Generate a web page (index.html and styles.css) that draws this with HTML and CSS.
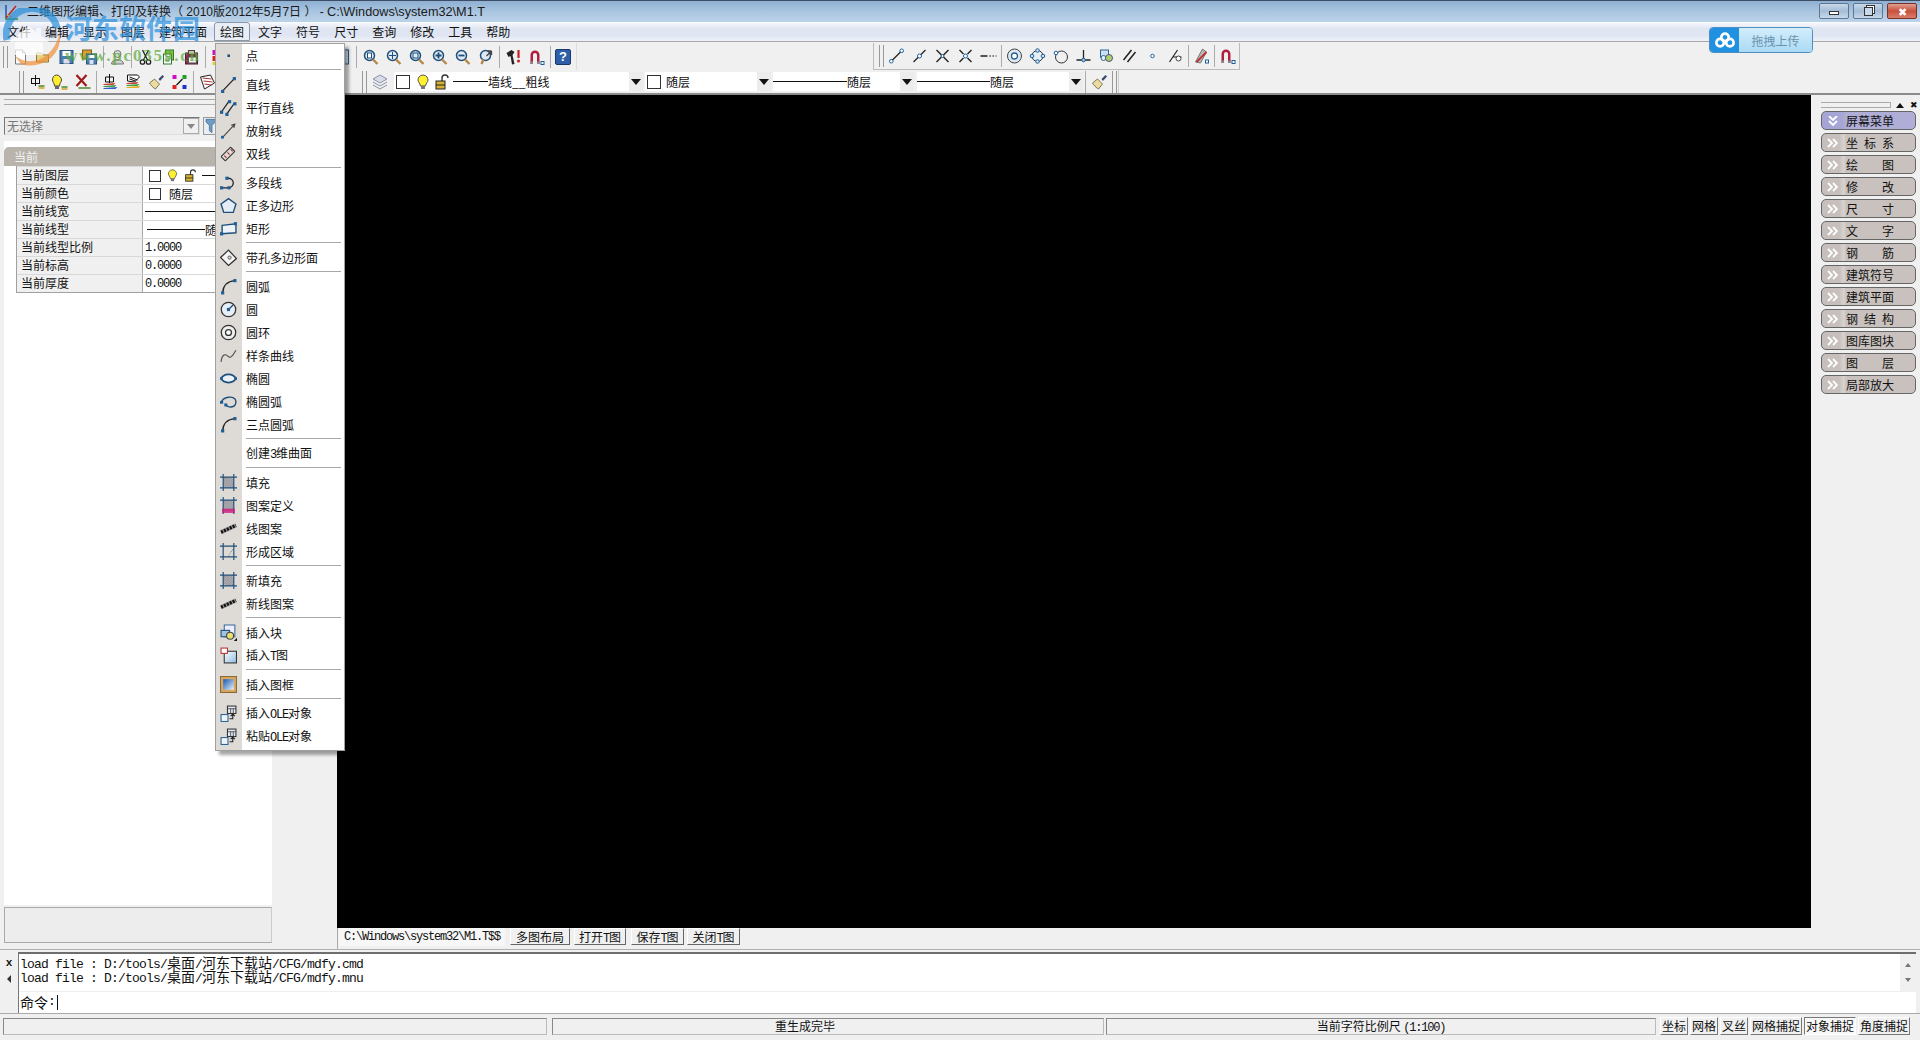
FILE: index.html
```html
<!DOCTYPE html>
<html lang="zh-CN">
<head>
<meta charset="utf-8">
<title>二维图形编辑、打印及转换</title>
<link rel="stylesheet" href="styles.css">
</head>
<body>
<svg class="sprite" xmlns="http://www.w3.org/2000/svg">
<defs>
<pattern id="ht" width="2" height="2" patternUnits="userSpaceOnUse"><rect width="1" height="1" fill="#667"/><rect x="1" y="1" width="1" height="1" fill="#667"/></pattern>
<linearGradient id="gb" x1="0" y1="0" x2="1" y2="1"><stop offset="0" stop-color="#1557b0"/><stop offset="1" stop-color="#e8f2fb"/></linearGradient>
<linearGradient id="gs" x1="0" y1="0" x2="1" y2="1"><stop offset="0" stop-color="#fff"/><stop offset="1" stop-color="#8fbbe0"/></linearGradient>
</defs>
<symbol id="point" viewBox="0 0 16 16"><rect x="7" y="7" width="2.4" height="2.4" fill="#1f4e79"/></symbol>
<symbol id="line" viewBox="0 0 16 16"><path d="M2.500 14L13.500 2.500" stroke="#222" stroke-width="1.200"/><rect x="1" y="13" width="3" height="3" fill="#1f5f99"/><rect x="12" y="1" width="3" height="3" fill="#1f5f99"/></symbol>
<symbol id="par" viewBox="0 0 16 16"><path d="M1.500 12L8.500 2M6.500 14L13.500 4" stroke="#222" stroke-width="1.200"/><rect x="0" y="11" width="3" height="3" fill="#1f5f99"/><rect x="7.500" y="1" width="3" height="3" fill="#1f5f99"/><rect x="5" y="13" width="3" height="3" fill="#1f5f99"/><rect x="12.500" y="3" width="3" height="3" fill="#1f5f99"/></symbol>
<symbol id="ray" viewBox="0 0 16 16"><path d="M2 15L14 2M10.500 3l3.500-1-1 3.500" stroke="#444" fill="none"/><rect x="1" y="13" width="2.600" height="2.600" fill="#1f5f99"/></symbol>
<symbol id="dline" viewBox="0 0 16 16"><path d="M1 11L10 2M5 15L14 6M1 11l4 4M10 2l4 4" stroke="#333" fill="none"/><path d="M4 10l2 2M7 7l2 2M10 4l2 2" stroke="#a33"/></symbol>
<symbol id="pline" viewBox="0 0 16 16"><path d="M1.500 13H8a4.500 4.500 0 0 0 0-9H6" stroke="#222" fill="none" stroke-width="1.200"/><rect x="0" y="11.500" width="3" height="3" fill="#1f5f99"/><rect x="7" y="11.500" width="3" height="3" fill="#1f5f99"/><rect x="5" y="2.500" width="3" height="3" fill="#1f5f99"/></symbol>
<symbol id="poly" viewBox="0 0 16 16"><path d="M8 1.500L15 6.500 12.500 14.500H3.500L1 6.500Z" fill="#e4edf5" stroke="#1f4e79" stroke-width="1.300"/></symbol>
<symbol id="rect" viewBox="0 0 16 16"><path d="M2 5L15 3.500V12L2 13Z" fill="#eef3f8" stroke="#1f4e79" stroke-width="1.300"/><rect x="0" y="11.500" width="3" height="3" fill="#1f5f99"/><rect x="13" y="2" width="3" height="3" fill="#1f5f99"/></symbol>
<symbol id="hole" viewBox="0 0 16 16"><path d="M8 1L15.500 9 8 15.500 .5 8Z" fill="#f4f4f4" stroke="#333" stroke-width="1.200"/><circle cx="9" cy="8" r="1.500" fill="#d8d8d8" stroke="#777"/></symbol>
<symbol id="arc" viewBox="0 0 16 16"><path d="M2.500 14C3 7 7 3 14 2.500" stroke="#222" fill="none" stroke-width="1.300"/><rect x="1" y="12.500" width="3" height="3" fill="#1f5f99"/><rect x="12.500" y="1" width="3" height="3" fill="#1f5f99"/></symbol>
<symbol id="circle" viewBox="0 0 16 16"><circle cx="8" cy="8" r="6.800" fill="#e6eff7" stroke="#333" stroke-width="1.200"/><path d="M8 8L12.500 3.500" stroke="#1f4e79" stroke-width="1.200"/><rect x="6.500" y="6.500" width="3" height="3" fill="#1f5f99"/></symbol>
<symbol id="ring" viewBox="0 0 16 16"><circle cx="8" cy="8" r="6.800" fill="#eee" stroke="#333" stroke-width="1.200"/><circle cx="8" cy="8" r="2.800" fill="#fff" stroke="#333" stroke-width="1.200"/></symbol>
<symbol id="spline" viewBox="0 0 16 16"><path d="M1 14C2 5 6 7 8 9S12 8 15 3" stroke="#555" fill="none" stroke-width="1.100"/></symbol>
<symbol id="ell" viewBox="0 0 16 16"><ellipse cx="8" cy="8" rx="6.500" ry="3.800" fill="#eaf1f8" stroke="#1f4e79" stroke-width="1.600"/><rect x="0" y="6.700" width="2.600" height="2.600" fill="#1f5f99"/><rect x="13.400" y="6.700" width="2.600" height="2.600" fill="#1f5f99"/></symbol>
<symbol id="ellarc" viewBox="0 0 16 16"><path d="M2 9C0 4 15 1 15 8S6 14 5 10" stroke="#1f4e79" fill="none" stroke-width="1.300"/><rect x="0" y="7.500" width="3" height="2.600" fill="#1f5f99"/><rect x="4" y="10" width="3" height="2.600" fill="#1f5f99"/></symbol>
<symbol id="hatch" viewBox="0 0 16 16"><rect x="3" y="3" width="10" height="10" fill="url(#ht)"/><path d="M3 0V16M13 0V16M0 3H16M0 13H16" stroke="#1f4e79" stroke-width="1.100"/></symbol>
<symbol id="hatchd" viewBox="0 0 16 16"><rect x="3" y="3" width="10" height="10" fill="url(#ht)"/><path d="M3 0V16M13 0V16M0 3H16" stroke="#1f4e79" stroke-width="1.100"/><rect x="2" y="11" width="12" height="4" fill="#d0187c" opacity=".8"/></symbol>
<symbol id="lpat" viewBox="0 0 16 16"><path d="M1 11.500L15 5" stroke="#999" stroke-width="4"/><path d="M1 11.500L15 5" stroke="#111" stroke-width="3" stroke-dasharray="2 1"/></symbol>
<symbol id="region" viewBox="0 0 16 16"><path d="M3 0V16M13 0V16M0 3H16M0 13H16" stroke="#1f4e79" stroke-width="1.100"/><path d="M12 6L8 12" stroke="#888" stroke-dasharray="1 1"/></symbol>
<symbol id="insb" viewBox="0 0 16 16"><path d="M4 1H14V12H4Z" fill="#eef" stroke="#39699a"/><rect x="1" y="6" width="8" height="6" fill="#9fc3e0" stroke="#1f4e79"/><circle cx="9.500" cy="11" r="3.300" fill="#e8e070" stroke="#444"/><path d="M13 16h3v-3Z" fill="#111"/></symbol>
<symbol id="inst" viewBox="0 0 16 16"><rect x="4" y="4" width="11.500" height="11" fill="url(#gs)" stroke="#333"/><rect x="1" y="1" width="6" height="5" fill="#fff" stroke="#b33"/></symbol>
<symbol id="insf" viewBox="0 0 16 16"><rect x="0.500" y="0.500" width="15" height="15" fill="#d9a860" stroke="#8a6a38"/><rect x="3" y="3" width="10" height="10" fill="url(#gb)"/></symbol>
<symbol id="ole" viewBox="0 0 16 16"><rect x="7" y="1" width="8" height="7" fill="#dfe8f2" stroke="#333"/><path d="M7 3.500H15M10 3.500V8M12.500 3.500V8" stroke="#333" stroke-width=".7"/><rect x="1" y="9" width="6.500" height="6.500" fill="#eef4fa" stroke="#2a6496"/><path d="M9 13h3v-4M10 10.500l2-2 2 2" fill="none" stroke="#222"/></symbol>
<symbol id="new" viewBox="0 0 16 16"><path d="M3 1H10L13 4V15H3Z" fill="#fff" stroke="#777"/><path d="M10 1V4H13" fill="none" stroke="#777"/></symbol>
<symbol id="open" viewBox="0 0 16 16"><path d="M1 13V4H6L8 6H13V13Z" fill="#e8d080" stroke="#8a7a30"/></symbol>
<symbol id="save" viewBox="0 0 16 16"><rect x="1.500" y="1.500" width="13" height="13" fill="#4a7fb0" stroke="#24527c"/><rect x="4" y="2" width="8" height="5" fill="#fff"/><rect x="5" y="10" width="6" height="4.500" fill="#dde"/></symbol>
<symbol id="saveall" viewBox="0 0 16 16"><rect x="1" y="1" width="9" height="9" fill="#d8a030" stroke="#7a5a20"/><rect x="5" y="5" width="10" height="10" fill="#4a7fb0" stroke="#24527c"/><rect x="7" y="6" width="6" height="3" fill="#fff"/><rect x="8" y="11" width="4" height="4" fill="#dde"/></symbol>
<symbol id="person" viewBox="0 0 16 16"><circle cx="8" cy="5" r="3.500" fill="#d9d9d9" stroke="#777"/><path d="M2 15C2 9 14 9 14 15Z" fill="#cfcfcf" stroke="#777"/></symbol>
<symbol id="cut" viewBox="0 0 16 16"><path d="M5 1L10 11M11 1L6 11" stroke="#222" stroke-width="1.300"/><circle cx="5" cy="13" r="2.200" fill="none" stroke="#222" stroke-width="1.300"/><circle cx="11" cy="13" r="2.200" fill="none" stroke="#222" stroke-width="1.300"/></symbol>
<symbol id="copy" viewBox="0 0 16 16"><rect x="5" y="1" width="8" height="10" fill="#8cc63f" stroke="#2f7a2f"/><rect x="3" y="5" width="8" height="10" fill="#fff" stroke="#2f7a2f"/><path d="M5 8h4M5 10h4M5 12h4" stroke="#2f7a2f"/></symbol>
<symbol id="paste" viewBox="0 0 16 16"><rect x="2" y="4" width="12" height="11" fill="#8a2f50" stroke="#4a1a30"/><rect x="5" y="1.500" width="6" height="4" fill="#c9c0a0" stroke="#444"/><rect x="5" y="8" width="8" height="6" fill="#eee" stroke="#555"/></symbol>
<symbol id="palette" viewBox="0 0 16 16"><rect x="1" y="1" width="5" height="5" fill="#d010c0"/><rect x="1" y="7" width="5" height="5" fill="#e02020"/><rect x="7" y="7" width="5" height="5" fill="#2030d0"/><rect x="1" y="13" width="5" height="3" fill="#e0d020"/></symbol>
<symbol id="props" viewBox="0 0 16 16"><rect x="2" y="1" width="12" height="14" fill="#d8e4f0" stroke="#2a5f90"/><path d="M5 4H11M5 7H11M5 10H11M5 13H11" stroke="#2a5f90"/></symbol>
<symbol id="z1" viewBox="0 0 16 16"><circle cx="7" cy="6.500" r="5" fill="#dfe9f2" stroke="#1f4e79" stroke-width="1.500"/><path d="M10.500 10.500L15 15" stroke="#b5884a" stroke-width="2.400"/><rect x="5" y="4" width="4" height="5" fill="#fff" stroke="#1f4e79"/></symbol>
<symbol id="z2" viewBox="0 0 16 16"><circle cx="7" cy="6.500" r="5" fill="#dfe9f2" stroke="#1f4e79" stroke-width="1.500"/><path d="M10.500 10.500L15 15" stroke="#b5884a" stroke-width="2.400"/><path d="M7 3V10M3.500 6.500H10.500" stroke="#1f4e79"/></symbol>
<symbol id="z3" viewBox="0 0 16 16"><circle cx="7" cy="6.500" r="5" fill="#dfe9f2" stroke="#1f4e79" stroke-width="1.500"/><path d="M10.500 10.500L15 15" stroke="#b5884a" stroke-width="2.400"/><rect x="4.500" y="4" width="5" height="5" fill="none" stroke="#1f4e79"/></symbol>
<symbol id="z4" viewBox="0 0 16 16"><circle cx="7" cy="6.500" r="5" fill="#dfe9f2" stroke="#1f4e79" stroke-width="1.500"/><path d="M10.500 10.500L15 15" stroke="#b5884a" stroke-width="2.400"/><path d="M7 3.500V9.500M4 6.500H10" stroke="#1f4e79" stroke-width="1.800"/></symbol>
<symbol id="z5" viewBox="0 0 16 16"><circle cx="7" cy="6.500" r="5" fill="#dfe9f2" stroke="#1f4e79" stroke-width="1.500"/><path d="M10.500 10.500L15 15" stroke="#b5884a" stroke-width="2.400"/><path d="M4 6.500H10" stroke="#1f4e79" stroke-width="1.800"/></symbol>
<symbol id="z6" viewBox="0 0 16 16"><circle cx="8" cy="6.500" r="5" fill="#dfe9f2" stroke="#1f4e79" stroke-width="1.500"/><path d="M6 10.500L4 15" stroke="#b5884a" stroke-width="2.400"/><path d="M14 2L9 7M14 2H10M14 2V6" fill="none" stroke="#444" stroke-width="1.300"/></symbol>
<symbol id="hammer" viewBox="0 0 16 16"><path d="M1 4L6 1 9 3 7 6 9 15 6.500 15.500 5 7 3 8Z" fill="#222"/><path d="M13 1V9" stroke="#c02020" stroke-width="2.200"/><circle cx="13" cy="12" r="1.500" fill="#c02020"/></symbol>
<symbol id="magnet" viewBox="0 0 16 16"><path d="M2 15V6A4.500 4.500 0 0 1 11 6V15H8.500V6A2 2 0 0 0 4.500 6V15Z" fill="#b01f3f"/><rect x="2" y="12.500" width="2.500" height="2.500" fill="#888"/><rect x="8.500" y="12.500" width="2.500" height="2.500" fill="#888"/><rect x="12.500" y="12.500" width="3" height="3" fill="#fff" stroke="#1f5f99"/></symbol>
<symbol id="laysym" viewBox="0 0 16 16"><path d="M8 1L15 5 8 9 1 5Z" fill="#d8dde8" stroke="#8a93a8"/><path d="M1 8L8 12 15 8M1 11L8 15 15 11" fill="none" stroke="#8a93a8"/></symbol>
<symbol id="layplus" viewBox="0 0 16 16"><path d="M7 1V12M3 4.500H11" stroke="#111"/><rect x="3" y="4.500" width="8" height="5" fill="none" stroke="#111"/><path d="M10 12H16" stroke="#4a8a2a" stroke-width="1.500"/><path d="M10 14H16" stroke="#d8a020" stroke-width="1.500"/></symbol>
<symbol id="laybulb" viewBox="0 0 16 16"><path d="M5 1C2 1 1 4 1 6S3 9 3 12H8C8 9 10 8 10 6S8 1 5 1Z" fill="#ffee30" stroke="#444"/><rect x="3.500" y="12" width="4" height="3" fill="#666"/><path d="M10 13H16" stroke="#4a8a2a" stroke-width="1.500"/><path d="M10 15H16" stroke="#d8a020" stroke-width="1.500"/></symbol>
<symbol id="layx" viewBox="0 0 16 16"><path d="M2 1L12 12M12 1L2 12" stroke="#a01818" stroke-width="2.200"/><path d="M4 14H16" stroke="#4a8a2a" stroke-width="1.500"/></symbol>
<symbol id="layc" viewBox="0 0 16 16"><path d="M7 0V9M3 3H11M3 3V8H11V3" fill="none" stroke="#111"/><path d="M1 10L13 9 11 11H1Z" fill="#d04040"/><path d="M1 12L14 11 12 13H1Z" fill="#40a040"/><path d="M1 14L15 13 13 15H1Z" fill="#3060d0"/></symbol>
<symbol id="layd" viewBox="0 0 16 16"><path d="M2 1H12L14 3 9 8 2 7Z" fill="#fff" stroke="#111"/><path d="M4 3L12 6M4 5L10 7" stroke="#111"/><path d="M1 9L13 8 11 10H1Z" fill="#d04040"/><path d="M1 11L14 10 12 12H1Z" fill="#40a040"/><path d="M1 13L15 12 13 14H1Z" fill="#e0b020"/></symbol>
<symbol id="brush" viewBox="0 0 16 16"><path d="M10 5L14 1 15.500 2.500 11.500 7Z" fill="#3a4a70"/><path d="M6 5L11 10 7 15C5 14 2 11 1 9Z" fill="#e8dca0" stroke="#6a5a30" stroke-width=".8"/></symbol>
<symbol id="aligned" viewBox="0 0 16 16"><rect x="1" y="1" width="4" height="4" fill="#d010c0"/><rect x="11" y="1" width="4" height="4" fill="#20a020"/><rect x="1" y="11" width="4" height="4" fill="#e02020"/><rect x="11" y="11" width="4" height="4" fill="#2030d0"/><path d="M5 11L11 5" stroke="#111" stroke-width="1.200"/></symbol>
<symbol id="hatchbox" viewBox="0 0 16 16"><path d="M1 3L11 1 15 9 5 15Z" fill="#fff" stroke="#222"/><path d="M3 4L12 5M4 7L13 8M5 10L12 11" stroke="#a33"/></symbol>
<symbol id="s1" viewBox="0 0 16 16"><path d="M3.500 12.500L12.500 3.500" stroke="#222" stroke-width="1.200"/><circle cx="2.800" cy="13.200" r="1.800" fill="#fff" stroke="#1f5f99"/><circle cx="13.200" cy="2.800" r="1.800" fill="#fff" stroke="#1f5f99"/></symbol>
<symbol id="s2" viewBox="0 0 16 16"><path d="M2 14L14 2" stroke="#222" stroke-width="1.200"/><circle cx="8" cy="8" r="2" fill="#fff" stroke="#1f5f99"/></symbol>
<symbol id="s3" viewBox="0 0 16 16"><path d="M2 2L14 14M14 2L2 14" stroke="#222" stroke-width="1.400"/><circle cx="8" cy="8" r="1.500" fill="#fff" stroke="#1f5f99"/></symbol>
<symbol id="s4" viewBox="0 0 16 16"><path d="M2 2L6 6M10 10L14 14M14 2L10 6M6 10L2 14" stroke="#222" stroke-width="1.400"/><circle cx="8" cy="8" r="2" fill="#fff" stroke="#1f5f99"/></symbol>
<symbol id="s5" viewBox="0 0 16 16"><path d="M0 8H7" stroke="#222" stroke-width="1.500"/><path d="M9 8H16" stroke="#555" stroke-width="1.500" stroke-dasharray="1.500 1.500"/></symbol>
<symbol id="s6" viewBox="0 0 16 16"><circle cx="8" cy="8" r="7" fill="#dde6ef" stroke="#444"/><circle cx="8" cy="8" r="3" fill="#fff" stroke="#1f5f99" stroke-width="1.300"/></symbol>
<symbol id="s7" viewBox="0 0 16 16"><circle cx="8" cy="8" r="5.500" fill="#e6eef6" stroke="#333"/><circle cx="8" cy="2.500" r="1.800" fill="#cfe0f0" stroke="#1f5f99"/><circle cx="8" cy="13.500" r="1.800" fill="#cfe0f0" stroke="#1f5f99"/><circle cx="2.500" cy="8" r="1.800" fill="#cfe0f0" stroke="#1f5f99"/><circle cx="13.500" cy="8" r="1.800" fill="#cfe0f0" stroke="#1f5f99"/></symbol>
<symbol id="s8" viewBox="0 0 16 16"><circle cx="9" cy="9" r="6" fill="#f0f0f0" stroke="#333"/><circle cx="3.500" cy="5" r="1.800" fill="#fff" stroke="#1f5f99"/></symbol>
<symbol id="s9" viewBox="0 0 16 16"><path d="M8 2V12M1 12H15" stroke="#222" stroke-width="1.300"/><circle cx="8" cy="12" r="1.800" fill="#9fc3e0" stroke="#1f5f99"/></symbol>
<symbol id="s10" viewBox="0 0 16 16"><rect x="2" y="2" width="8" height="7" fill="#cfe0f0" stroke="#2a6496"/><circle cx="5" cy="10" r="2.500" fill="#e8eef5" stroke="#2a6496"/><circle cx="10.500" cy="10" r="3.500" fill="#a8d070" stroke="#557"/></symbol>
<symbol id="s11" viewBox="0 0 16 16"><path d="M2 12L10 2M6 14L14 4" stroke="#222" stroke-width="1.500"/></symbol>
<symbol id="s12" viewBox="0 0 16 16"><circle cx="8" cy="8" r="1.800" fill="#fff" stroke="#2a6496"/></symbol>
<symbol id="s13" viewBox="0 0 16 16"><path d="M2 14L10 2M6 9H14" stroke="#222" stroke-width="1.200"/><circle cx="11" cy="10.500" r="2.500" fill="#fff" stroke="#444"/></symbol>
<symbol id="s14" viewBox="0 0 16 16"><path d="M2 14L9 1 13 4 7 15Z" fill="#b8b8b8" stroke="#777"/><path d="M3 14L13 4" stroke="#c03030" stroke-width="1.800"/><rect x="12" y="12" width="3" height="3" fill="#fff" stroke="#1f5f99"/></symbol>
<symbol id="bulb" viewBox="0 0 16 16"><path d="M8 1C4.500 1 3 4 3 6S5 9 5.500 12H10.500C11 9 13 8 13 6S11.500 1 8 1Z" fill="#fff030" stroke="#555"/><rect x="6" y="12" width="4" height="3" fill="#777"/></symbol>
<symbol id="lock" viewBox="0 0 16 16"><path d="M8 7V4A3 3 0 0 1 14 4" fill="none" stroke="#333" stroke-width="1.400"/><rect x="2" y="7" width="9" height="8" fill="#d8b030" stroke="#222"/><path d="M2 11H11" stroke="#222"/></symbol>
<symbol id="funnel" viewBox="0 0 16 24"><path d="M2 2H16V6L11 11V22L7 19V11L2 6Z" fill="#6f9cc4" stroke="#3a6288"/></symbol>
<symbol id="chev" viewBox="0 0 12 10"><path d="M1 1L5 5 1 9M6 1L10 5 6 9" fill="none" stroke="#fff" stroke-width="1.800"/></symbol>
<symbol id="chevd" viewBox="0 0 12 10"><path d="M2 0L6 4 10 0M2 5L6 9 10 5" fill="none" stroke="#fff" stroke-width="1.800"/></symbol>
</svg>

<div class="app">
  <header class="titlebar">
    <svg class="appicon" viewBox="0 0 16 16"><path d="M2 15H15" stroke="#2f8a2f" stroke-width="1.500"/><path d="M3 1V14" stroke="#2a4fb0" stroke-width="1.500"/><path d="M3 14L13 2" stroke="#c02020" stroke-width="1.500"/><path d="M4 11L9 13" stroke="#d8a020" stroke-width="1.500"/></svg>
    <span class="ttext">二维图形编辑、打印及转换（ 2010版2012年5月7日 ） - <span class="tpath">C:\Windows\system32\M1.T</span></span>
    <div class="winbtns">
      <div class="wb"><span class="wmin"></span></div>
      <div class="wb"><span class="wres"></span></div>
      <div class="wb wclose">✖</div>
    </div>
  </header>

  <nav class="menubar">
    <span class="mb">文件</span><span class="mb">编辑</span><span class="mb">显示</span><span class="mb">图层</span><span class="mb">建筑平面</span><span class="mb mb-on">绘图</span><span class="mb">文字</span><span class="mb">符号</span><span class="mb">尺寸</span><span class="mb">查询</span><span class="mb">修改</span><span class="mb">工具</span><span class="mb">帮助</span>
  </nav>

  <div class="tbrow tbrow1">
    <div class="tb tb-a">
      <i class="grip"></i>
      <svg class="c"><use href="#new"/></svg><svg class="c"><use href="#open"/></svg><svg class="c"><use href="#save"/></svg><svg class="c"><use href="#saveall"/></svg>
      <i class="s"></i>
      <svg class="c"><use href="#person"/></svg>
      <i class="s"></i>
      <svg class="c"><use href="#cut"/></svg><svg class="c"><use href="#copy"/></svg><svg class="c"><use href="#paste"/></svg>
      <i class="s"></i>
      <svg class="c"><use href="#palette"/></svg>
      <div class="gap-a"></div>
      <svg class="c"><use href="#props"/></svg>
      <i class="s"></i>
      <svg class="c"><use href="#z1"/></svg><svg class="c"><use href="#z2"/></svg><svg class="c"><use href="#z3"/></svg><svg class="c"><use href="#z4"/></svg><svg class="c"><use href="#z5"/></svg><svg class="c"><use href="#z6"/></svg>
      <i class="s"></i>
      <svg class="c"><use href="#hammer"/></svg><svg class="c"><use href="#magnet"/></svg>
      <i class="s"></i>
      <span class="c help">?</span>
    </div>
    <div class="tb tb-b">
      <i class="grip"></i>
      <svg class="c"><use href="#s1"/></svg><svg class="c"><use href="#s2"/></svg><svg class="c"><use href="#s3"/></svg><svg class="c"><use href="#s4"/></svg><svg class="c"><use href="#s5"/></svg>
      <i class="s"></i>
      <svg class="c"><use href="#s6"/></svg><svg class="c"><use href="#s7"/></svg><svg class="c"><use href="#s8"/></svg><svg class="c"><use href="#s9"/></svg><svg class="c"><use href="#s10"/></svg><svg class="c"><use href="#s11"/></svg><svg class="c"><use href="#s12"/></svg><svg class="c"><use href="#s13"/></svg>
      <i class="s"></i>
      <svg class="c"><use href="#s14"/></svg>
      <i class="s"></i>
      <svg class="c"><use href="#magnet"/></svg>
    </div>
  </div>

  <div class="tbrow tbrow2">
    <div class="tb tb-c">
      <i class="grip"></i>
      <svg class="c"><use href="#layplus"/></svg><svg class="c"><use href="#laybulb"/></svg><svg class="c"><use href="#layx"/></svg>
      <i class="s"></i>
      <svg class="c"><use href="#layc"/></svg><svg class="c"><use href="#layd"/></svg><svg class="c"><use href="#brush"/></svg><svg class="c"><use href="#aligned"/></svg>
      <i class="s"></i>
      <svg class="c"><use href="#hatchbox"/></svg>
    </div>
    <div class="tb tb-d">
      <i class="grip"></i>
      <svg class="c laysym"><use href="#laysym"/></svg>
      <div class="combo combo1">
        <i class="chk"></i><svg class="mini"><use href="#bulb"/></svg><svg class="mini"><use href="#lock"/></svg><i class="ln ln1"></i><span>墙线__粗线</span><span class="ar"><b></b></span>
      </div>
      <div class="combo combo2"><i class="chk"></i><span>随层</span><span class="ar"><b></b></span></div>
      <div class="combo combo3"><i class="ln"></i><span>随层</span><span class="ar"><b></b></span></div>
      <div class="combo combo4"><i class="ln"></i><span>随层</span><span class="ar"><b></b></span></div>
      <i class="s"></i>
      <svg class="c"><use href="#brush"/></svg>
      <i class="grip"></i>
    </div>
  </div>

  <main class="work">
    <aside class="left">
      <div class="lbar"></div>
      <div class="lcombos">
        <div class="selbox"><span>无选择</span><span class="selar"><b></b></span></div>
        <div class="filt"><svg class="fun"><use href="#funnel"/></svg></div>
      </div>
      <div class="props">
        <div class="phead">当前</div>
        <div class="ptable">
          <div class="pr"><div class="pl">当前图层</div><div class="pv"><i class="chk"></i><svg class="mini"><use href="#bulb"/></svg><svg class="mini"><use href="#lock"/></svg><i class="ln"></i></div></div>
          <div class="pr"><div class="pl">当前颜色</div><div class="pv"><i class="chk"></i><span class="pt">随层</span></div></div>
          <div class="pr"><div class="pl">当前线宽</div><div class="pv"><i class="ln"></i></div></div>
          <div class="pr"><div class="pl">当前线型</div><div class="pv"><i class="ln ln2"></i><span>随层</span></div></div>
          <div class="pr"><div class="pl">当前线型比例</div><div class="pv m12">1.0000</div></div>
          <div class="pr"><div class="pl">当前标高</div><div class="pv m12">0.0000</div></div>
          <div class="pr"><div class="pl">当前厚度</div><div class="pv m12">0.0000</div></div>
        </div>
      </div>
      <div class="lfoot"></div>
    </aside>

    <section class="center">
      <div class="canvas"></div>
      <div class="tabs">
        <div class="path m12">C:\Windows\system32\M1.T$$</div>
        <div class="tbtn t1">多图布局</div>
        <div class="tbtn t2">打开<span class="m12">T</span>图</div>
        <div class="tbtn t3">保存<span class="m12">T</span>图</div>
        <div class="tbtn t4">关闭<span class="m12">T</span>图</div>
      </div>
    </section>

    <aside class="right">
      <div class="rhead"><div class="rgrip"></div><span class="rup"></span><span class="rx">✖</span></div>
      <div class="rb rb-on"><svg class="chv"><use href="#chevd"/></svg><div class="rt"><span>屏幕菜单</span></div></div>
      <div class="rb"><svg class="chv"><use href="#chev"/></svg><div class="rt"><span>坐</span><span>标</span><span>系</span></div></div>
      <div class="rb"><svg class="chv"><use href="#chev"/></svg><div class="rt"><span>绘</span><span>图</span></div></div>
      <div class="rb"><svg class="chv"><use href="#chev"/></svg><div class="rt"><span>修</span><span>改</span></div></div>
      <div class="rb"><svg class="chv"><use href="#chev"/></svg><div class="rt"><span>尺</span><span>寸</span></div></div>
      <div class="rb"><svg class="chv"><use href="#chev"/></svg><div class="rt"><span>文</span><span>字</span></div></div>
      <div class="rb"><svg class="chv"><use href="#chev"/></svg><div class="rt"><span>钢</span><span>筋</span></div></div>
      <div class="rb"><svg class="chv"><use href="#chev"/></svg><div class="rt"><span>建筑符号</span></div></div>
      <div class="rb"><svg class="chv"><use href="#chev"/></svg><div class="rt"><span>建筑平面</span></div></div>
      <div class="rb"><svg class="chv"><use href="#chev"/></svg><div class="rt"><span>钢</span><span>结</span><span>构</span></div></div>
      <div class="rb"><svg class="chv"><use href="#chev"/></svg><div class="rt"><span>图库图块</span></div></div>
      <div class="rb"><svg class="chv"><use href="#chev"/></svg><div class="rt"><span>图</span><span>层</span></div></div>
      <div class="rb"><svg class="chv"><use href="#chev"/></svg><div class="rt"><span>局部放大</span></div></div>
    </aside>
  </main>

  <section class="cmd">
    <div class="cmdside"><span class="cx">x</span><span class="ctri"></span></div>
    <div class="cmdbox">
      <div class="cmdlog">
        <div class="logtext">
          <div class="logline"><span class="m14">load file : D:/tools/</span>桌面<span class="m14">/</span>河东下载站<span class="m14">/CFG/mdfy.cmd</span></div>
          <div class="logline"><span class="m14">load file : D:/tools/</span>桌面<span class="m14">/</span>河东下载站<span class="m14">/CFG/mdfy.mnu</span></div>
        </div>
        <div class="scroll"><b class="up"></b><b class="dn"></b></div>
      </div>
      <div class="cmdline">命令<span class="m14">:</span><i class="caret"></i></div>
    </div>
  </section>

  <footer class="status">
    <div class="sb sb1"></div>
    <div class="sb sb2">重生成完毕</div>
    <div class="sb sb3">当前字符比例尺 <span class="m12">(1:100)</span></div>
    <div class="sk sk2">坐标</div>
    <div class="sk sk2">网格</div>
    <div class="sk sk2">叉丝</div>
    <div class="sk sk4">网格捕捉</div>
    <div class="sk sk4 sk-on">对象捕捉</div>
    <div class="sk sk4">角度捕捉</div>
  </footer>
</div>

<!-- overlays -->
<div class="menu">
  <div class="mi"><svg class="mic"><use href="#point"/></svg><span>点</span></div>
  <div class="ms"></div>
  <div class="mi"><svg class="mic"><use href="#line"/></svg><span>直线</span></div>
  <div class="mi"><svg class="mic"><use href="#par"/></svg><span>平行直线</span></div>
  <div class="mi"><svg class="mic"><use href="#ray"/></svg><span>放射线</span></div>
  <div class="mi"><svg class="mic"><use href="#dline"/></svg><span>双线</span></div>
  <div class="ms"></div>
  <div class="mi"><svg class="mic"><use href="#pline"/></svg><span>多段线</span></div>
  <div class="mi"><svg class="mic"><use href="#poly"/></svg><span>正多边形</span></div>
  <div class="mi"><svg class="mic"><use href="#rect"/></svg><span>矩形</span></div>
  <div class="ms"></div>
  <div class="mi"><svg class="mic"><use href="#hole"/></svg><span>带孔多边形面</span></div>
  <div class="ms"></div>
  <div class="mi"><svg class="mic"><use href="#arc"/></svg><span>圆弧</span></div>
  <div class="mi"><svg class="mic"><use href="#circle"/></svg><span>圆</span></div>
  <div class="mi"><svg class="mic"><use href="#ring"/></svg><span>圆环</span></div>
  <div class="mi"><svg class="mic"><use href="#spline"/></svg><span>样条曲线</span></div>
  <div class="mi"><svg class="mic"><use href="#ell"/></svg><span>椭圆</span></div>
  <div class="mi"><svg class="mic"><use href="#ellarc"/></svg><span>椭圆弧</span></div>
  <div class="mi"><svg class="mic"><use href="#arc"/></svg><span>三点圆弧</span></div>
  <div class="ms"></div>
  <div class="mi"><i class="mic"></i><span>创建<span class="m12">3</span>维曲面</span></div>
  <div class="ms"></div>
  <div class="mi"><svg class="mic"><use href="#hatch"/></svg><span>填充</span></div>
  <div class="mi"><svg class="mic"><use href="#hatchd"/></svg><span>图案定义</span></div>
  <div class="mi"><svg class="mic"><use href="#lpat"/></svg><span>线图案</span></div>
  <div class="mi"><svg class="mic"><use href="#region"/></svg><span>形成区域</span></div>
  <div class="ms"></div>
  <div class="mi"><svg class="mic"><use href="#hatch"/></svg><span>新填充</span></div>
  <div class="mi"><svg class="mic"><use href="#lpat"/></svg><span>新线图案</span></div>
  <div class="ms"></div>
  <div class="mi"><svg class="mic"><use href="#insb"/></svg><span>插入块</span></div>
  <div class="mi"><svg class="mic"><use href="#inst"/></svg><span>插入<span class="m12">T</span>图</span></div>
  <div class="ms"></div>
  <div class="mi"><svg class="mic"><use href="#insf"/></svg><span>插入图框</span></div>
  <div class="ms"></div>
  <div class="mi"><svg class="mic"><use href="#ole"/></svg><span>插入<span class="m12">OLE</span>对象</span></div>
  <div class="mi"><svg class="mic"><use href="#ole"/></svg><span>粘贴<span class="m12">OLE</span>对象</span></div>
</div>

<div class="bdup">
  <div class="bdicon"><svg viewBox="0 0 24 18"><g fill="none" stroke="#fff" stroke-width="3"><circle cx="12" cy="6" r="4.200"/><circle cx="6.500" cy="12" r="4.200"/><circle cx="17.500" cy="12" r="4.200"/></g></svg></div>
  <div class="bdtext">拖拽上传</div>
</div>

<div class="wm">
  <svg class="wmlogo" viewBox="0 0 62 58"><path d="M4 32A25 25 0 0 1 54 20" fill="none" stroke="#2a8fd8" stroke-width="7" opacity=".7"/><path d="M10 46C24 60 50 54 57 24 60 50 36 62 18 56Z" fill="#ec8f3a" opacity=".7"/><path d="M6 34L26 18 33 24V20H38V28L46 34H40V47H12V34Z" fill="#fff" opacity=".7"/></svg>
  <div class="wmt">
    <div class="wm1">河东软件园</div>
    <div class="wm2">www.pc0359.cn</div>
  </div>
</div>
</body>
</html>
```
FILE: styles.css
```css
* { box-sizing: border-box; }
html, body { margin: 0; padding: 0; }
body {
  width: 1920px; height: 1040px; overflow: hidden; position: relative;
  font: 12px/16px "Noto Sans CJK SC", "Liberation Sans", sans-serif; color: #111;
  background: #f0f0f0;
}
.sprite { position: absolute; width: 0; height: 0; }
i { display: block; font-style: normal; flex: none; }
.m12 { font-family: "Liberation Mono", monospace; font-size: 12px; letter-spacing: -1.2px; }
.m14 { font-family: "Liberation Mono", monospace; font-size: 13px; letter-spacing: -.8px; }

.app { display: flex; flex-direction: column; height: 1040px; }

/* title */
.titlebar {
  height: 22px; flex: none; display: flex; align-items: center; padding: 0 3px;
  border-top: 1px solid #3d4d66;
  background: linear-gradient(#8fb0d2, #a9c5e0 50%, #bcd3e9);
}
.appicon { width: 16px; height: 16px; flex: none; }
.ttext { margin-left: 8px; font-size: 12px; color: #1a1a1a; white-space: nowrap; font-family: "Liberation Sans", "Noto Sans CJK SC", sans-serif; }
.tpath { font-size: 12.700px; }
.winbtns { margin-left: auto; display: flex; gap: 4px; margin-top: -1px; }
.wb {
  width: 30px; height: 16px; border: 1px solid #5f7690; border-radius: 2px; display: flex; align-items: center; justify-content: center;
  background: linear-gradient(#c7d8ea, #a4bdd6 50%, #c6d8ea);
}
.wmin { width: 10px; height: 4px; border: 1px solid #333; background: #fff; margin-top: 3px; }
.wres { width: 9px; height: 9px; border: 1px solid #333; box-shadow: 2px -2px 0 -1px #fff, 2px -2px 0 0 #333; background: #c7d8ea; }
.wclose { background: linear-gradient(#e0a090, #c8503c 50%, #d97f68); color: #fff; font-size: 11px; border-color: #7a3028; }

/* menu bar */
.menubar {
  height: 20px; flex: none; display: flex; align-items: center;
  background: linear-gradient(#fafbfe 0, #e0e5f2 35%, #dfe5f2 70%, #eef1f8);
  border-bottom: 1px solid #a8a8a8;
}
.mb { padding: 0 7px; white-space: nowrap; }
.mb-on { padding: 0 5px; margin: 0 1px 0 0; border: 1px solid #8a98ac; height: 19px; line-height: 17px; border-radius: 3px 3px 0 0; background: #e9edf5; }

/* toolbars */
.tbrow { display: flex; flex: none; background: #f0f0f0; }
.tbrow1 { height: 28px; padding-top: 1px; }
.tbrow2 { height: 25px; border-bottom: 2px solid #8c8c8c; }
.tb { display: flex; align-items: center; flex: none; }
.grip { width: 5px; height: 22px; border-left: 1px solid #999; border-right: 1px solid #999; margin: 0 1px; }
.c { width: 23px; height: 16px; flex: none; }
.s { width: 5px; height: 22px; flex: none; background: linear-gradient(#aaa, #aaa) center / 1px 100% no-repeat; }
.help { width: 16px; height: 16px; margin: 0 3px 0 2px; text-align: center; color: #fff; font: bold 13px/14px "Liberation Sans", sans-serif; background: #2d5fa8; border: 1px solid #17386b; border-radius: 2px; }
.tb-a { padding-left: 2px; width: 577px; border-right: 1px solid #ddd; }
.gap-a { width: 100px; flex: none; }
.tb-b { margin-left: 296px; padding-left: 4px; border-left: 1px solid #bbb; border-right: 1px solid #bbb; border-bottom: 1px solid #bbb; height: 27px; }
.tb-b .s { width: 3px; }
.tb-c { padding-left: 18px; width: 361px; }
.tb-d { height: 23px; border-right: 1px solid #ccc; }
.laysym { width: 24px; margin-right: 2px; }
.combo { height: 19px; display: flex; align-items: center; background: #fff; flex: none; white-space: nowrap; }
.combo1 { width: 249px; padding-left: 2px; margin-right: 2px; }
.combo2 { width: 126px; padding-left: 2px; margin-right: 2px; }
.combo3 { width: 141px; margin-right: 3px; }
.combo4 { width: 166px; }
.chk { width: 14px; height: 14px; border: 1px solid #333; background: #fff; flex: none; margin-right: 5px; }
.mini { width: 16px; height: 16px; flex: none; margin-right: 3px; }
.ln { height: 1px; background: #111; width: 72px; flex: none; }
.ln1 { width: 35px; }
.ar { margin-left: auto; width: 14px; height: 19px; background: #ececec; display: flex; align-items: center; justify-content: center; flex: none; }
.ar b { width: 0; height: 0; border: 5px solid transparent; border-top: 6px solid #111; border-bottom: 0; }
.combo3 .ln { width: 74px; }
.combo4 .ln { width: 73px; }

/* work */
.work { display: flex; height: 854px; flex: none; }
.left { width: 337px; flex: none; background: #f0f0f0; padding: 4px 0 0 4px; display: flex; flex-direction: column; }
.lbar { height: 6px; width: 268px; border-top: 1px solid #aaa; border-bottom: 1px solid #aaa; }
.lcombos { display: flex; margin: 12px 0 0 0; gap: 3px; height: 18px; }
.selbox { width: 196px; height: 18px; border: 1px solid; border-color: #777 #ddd #ddd #777; background: #ececec; color: #777; display: flex; align-items: center; padding-left: 2px; }
.selar { margin-left: auto; width: 16px; height: 16px; background: #f0f0f0; border: 1px solid #aaa; display: flex; align-items: center; justify-content: center; }
.selar b { border: 4px solid transparent; border-top: 5px solid #888; border-bottom: 0; }
.filt { width: 24px; height: 18px; border: 1px solid #999; background: #e8eef4; }
.fun { width: 12px; height: 16px; display: block; }
.props { width: 268px; height: 764px; margin-top: 6px; background: #fff; padding-top: 6px; flex: none; }
.phead { height: 19px; background: #b8b4ac; color: #f2f2f2; padding-left: 10px; line-height: 19px; border-radius: 5px 0 0 0; }
.ptable { margin-left: 12px; border-left: 1px solid #a0a0a0; border-bottom: 1px solid #a0a0a0; }
.pr { display: flex; height: 18px; border-top: 1px solid #d8d8d8; }
.pl { width: 126px; padding-left: 4px; background: #f0f0f0; border-right: 1px solid #aaa; line-height: 16px; flex: none; }
.pv { flex: 1; display: flex; align-items: center; padding-left: 2px; white-space: nowrap; }
.pv .chk { margin: 0 5px 0 4px; width: 12px; height: 12px; }
.pv .mini { width: 13px; height: 13px; margin-right: 5px; }
.pt { margin-left: 3px; }
.ln2 { margin-left: 2px; width: 58px; }
.lfoot { width: 268px; height: 36px; margin-top: 2px; border: 1px solid #aaa; border-color: #aaa #ccc #aaa #aaa; background: #ededed; }

.center { width: 1474px; flex: none; display: flex; flex-direction: column; }
.canvas { flex: 1; background: #000; }
.tabs { height: 21px; flex: none; display: flex; align-items: flex-start; padding-left: 1px; border-left: 1px solid #aaa; }
.path { width: 166px; height: 18px; line-height: 18px; padding-left: 5px; background: #f7f7f7; white-space: nowrap; margin-right: 5px; }
.tbtn { height: 17px; line-height: 15px; text-align: center; background: #f0f0f0; border: 1px solid; border-color: #fff #666 #666 #fff; flex: none; }
.t1 { width: 60px; margin-right: 4px; }
.t2 { width: 52px; margin-right: 5px; }
.t3 { width: 53px; margin-right: 3px; }
.t4 { width: 53px; }

.right { width: 109px; flex: none; padding: 4px 0 0 10px; background: #f0f0f0; }
.rhead { display: flex; align-items: center; height: 12px; }
.rgrip { width: 70px; height: 6px; border-top: 1px solid #aaa; border-bottom: 1px solid #aaa; border-right: 1px solid #aaa; }
.rup { margin-left: 5px; border: 4px solid transparent; border-bottom: 5px solid #111; border-top: 0; }
.rx { margin-left: 6px; font-size: 9px; line-height: 10px; }
.rb {
  width: 95px; height: 19px; margin-bottom: 3px; display: flex; align-items: center;
  border: 1px solid #666; border-radius: 5px;
  background: linear-gradient(90deg, #c6bfbc 0 17px, #d8d4d2 22px, #c8c1be 24px);
}
.rb-on { background: linear-gradient(90deg, #a6a6d6 0 20px, #b0aed6 24px); }
.chv { width: 12px; height: 10px; margin-left: 5px; flex: none; }
.rt { width: 48px; margin-left: 7px; display: flex; justify-content: space-between; white-space: nowrap; line-height: 17px; }

/* command */
.cmd { height: 64px; flex: none; display: flex; border-top: 1px solid #b0b0b0; padding-top: 2px; }
.cmdside { width: 18px; flex: none; display: flex; flex-direction: column; align-items: center; padding-top: 5px; }
.cx { font: bold 11px/12px "Liberation Mono", monospace; }
.ctri { margin-top: 6px; border: 4px solid transparent; border-right: 4px solid #333; border-left: 0; }
.cmdbox { width: 1898px; flex: none; border-top: 2px solid #6e6e6e; border-left: 1px solid #777; background: #fff; display: flex; flex-direction: column; }
.cmdlog { height: 38px; display: flex; border-bottom: 1px solid #eee; flex: none; }
.logtext { flex: 1; font-size: 14px; padding: 1px 0 0 1px; white-space: nowrap; }
.logline { height: 14px; line-height: 14px; }
.scroll { width: 16px; background: #f0f0f0; margin-left: auto; display: flex; flex-direction: column; align-items: center; justify-content: space-around; padding: 4px 0; }
.up { border: 3px solid transparent; border-bottom: 4px solid #777; border-top: 0; }
.dn { border: 3px solid transparent; border-top: 4px solid #777; border-bottom: 0; }
.cmdline { flex: 1; font-size: 14px; line-height: 20px; display: flex; align-items: center; padding: 0 0 4px 1px; }
.caret { width: 1px; height: 15px; background: #111; margin-left: 2px; }

/* status */
.status { flex: 1; display: flex; align-items: flex-start; gap: 2px; padding: 4px 0 0 3px; border-top: 1px solid #aaa; }
.sb { height: 17px; line-height: 14px; text-align: center; border: 1px solid #999; border-color: #888 #bbb #bbb #888; flex: none; white-space: nowrap; }
.sb1 { width: 544px; margin-right: 3px; }
.sb2 { width: 552px; padding-right: 46px; }
.sb3 { width: 550px; margin-right: 2px; }
.sk { height: 18px; margin-top: -1px; line-height: 15px; text-align: center; border: 1px solid; border-color: #fff #777 #777 #fff; flex: none; white-space: nowrap; }
.sk2 { width: 28px; }
.sk4 { width: 52px; }
.sk-on { border-color: #777 #fff #fff #777; background: #f8f8f8; }

/* overlays */
.menu {
  position: absolute; left: 215px; top: 43px; width: 130px; height: 708px; z-index: 5;
  border: 1px solid #a0a0a0; background: linear-gradient(90deg, #dedbd6 0 26px, #fff 26px);
  box-shadow: 4px 4px 3px rgba(0,0,0,.35);
}
.mi { height: 23px; display: flex; align-items: center; }
.mic { width: 17px; height: 17px; margin: 0 9px 0 4px; flex: none; }
.ms { height: 6px; margin: 0 3px 0 30px; position: relative; }
.ms::after { content: ""; position: absolute; left: 0; right: 0; top: 2px; height: 1px; background: #a8a8a8; }

.bdup {
  position: absolute; left: 1709px; top: 27px; width: 104px; height: 26px; z-index: 4; display: flex;
  border: 1px solid #4f8fbd; border-radius: 4px; overflow: hidden;
}
.bdicon { width: 29px; background: #2090e0; display: flex; align-items: center; justify-content: center; }
.bdicon svg { width: 22px; height: 16px; }
.bdtext { flex: 1; text-align: center; line-height: 25px; color: #6d93ab; background: linear-gradient(#d4edfb, #a9daf6); }

.wm { position: absolute; left: 3px; top: 8px; display: flex; z-index: 3; pointer-events: none; }
.wmlogo { width: 62px; height: 58px; flex: none; }
.wmt { margin-top: 2px; }
.wm1 { font: bold 27px/36px "Noto Sans CJK SC", sans-serif; color: #2a90dc; opacity: .7; white-space: nowrap; }
.wm2 { font: bold 17px/18px "Liberation Serif", serif; color: #5aa83c; opacity: .7; letter-spacing: 1.8px; margin-top: 1px; white-space: nowrap; }
```
